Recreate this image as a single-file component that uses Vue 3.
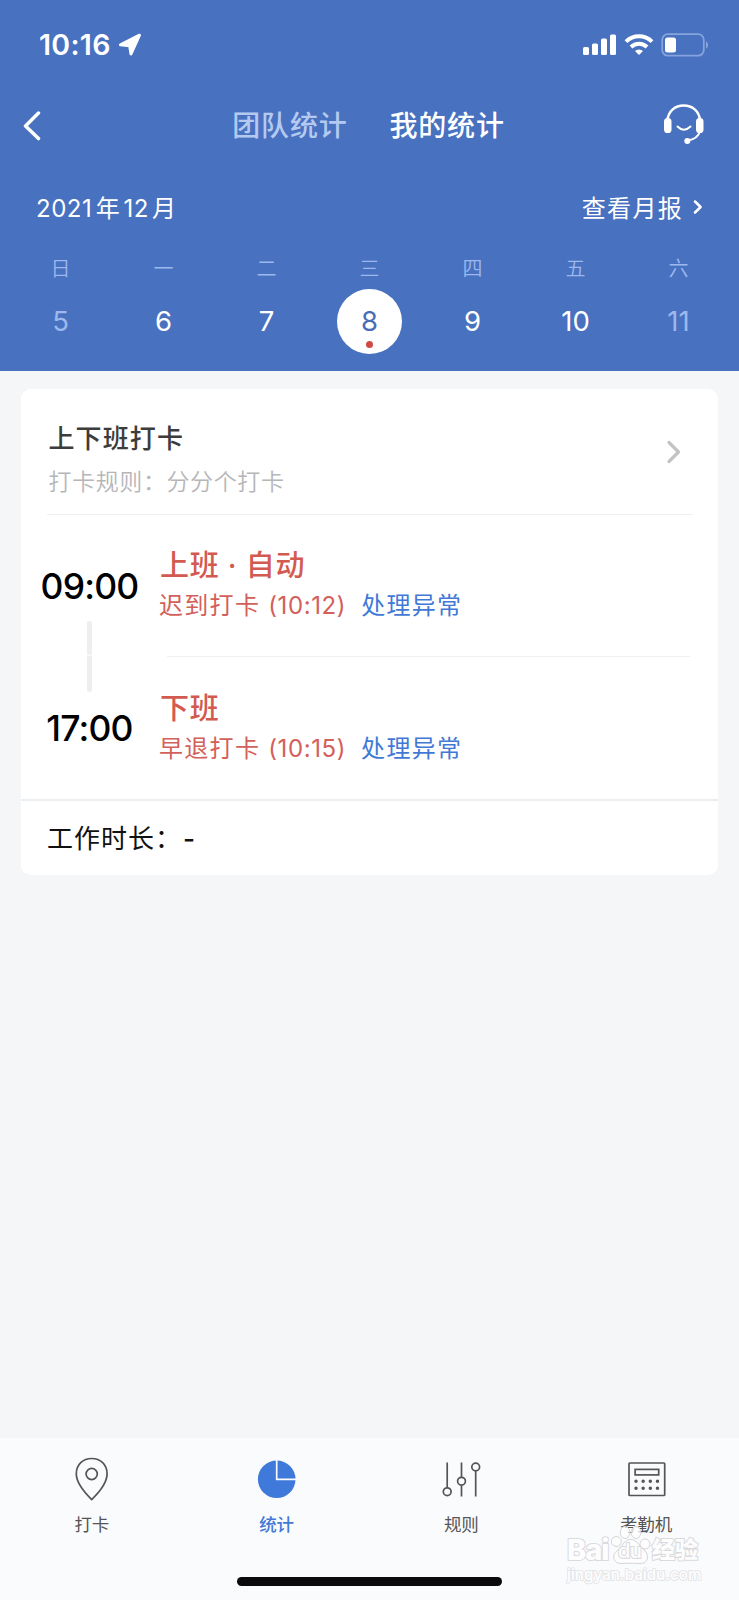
<script setup>
import { ref } from 'vue'

const tabs = ['团队统计', '我的统计']
const activeTab = ref(1)

const days = [
    { week: '日', day: 5, muted: true },
    { week: '一', day: 6 },
    { week: '二', day: 7 },
    { week: '三', day: 8, dot: true },
    { week: '四', day: 9 },
    { week: '五', day: 10 },
    { week: '六', day: 11, muted: true }
]
const selected = ref(8)

const records = [
    { time: '09:00', title: '上班 · 自动', status: '迟到打卡', at: '(10:12)' },
    { time: '17:00', title: '下班', status: '早退打卡', at: '(10:15)' }
]

const navs = [
    { key: 'clock', label: '打卡' },
    { key: 'stats', label: '统计' },
    { key: 'rules', label: '规则' },
    { key: 'device', label: '考勤机' }
]
const activeNav = ref('stats')
</script>

<template>
    <div class="page" lang="zh-CN">
        <header class="header">
            <div class="status-bar">
                <span class="clock">10:16</span>
                <svg class="location" width="24" height="24" viewBox="0 0 24 24">
                    <path d="M21.5 2.200 13 21 11.600 12.800 2.500 11.800Z" fill="#fff" stroke="#fff" stroke-width="3" stroke-linejoin="round" />
                </svg>
                <svg class="signals" width="128" height="24" viewBox="0 0 128 24">
                    <g fill="#fff">
                        <rect x="1" y="14" width="6" height="8" rx="1.5" />
                        <rect x="10" y="10.5" width="6" height="11.5" rx="1.5" />
                        <rect x="19" y="5.5" width="6" height="16.5" rx="1.5" />
                        <rect x="28" y="1.5" width="6" height="20.5" rx="1.5" />
                        <path d="M57 22 53 18a5.800 5.800 0 0 1 8 0Z" />
                        <rect x="83" y="4.5" width="11" height="15" rx="2.5" />
                    </g>
                    <g fill="none" stroke="#fff" stroke-width="4">
                        <path d="M44 8.6a18.6 18.6 0 0 1 26 0" />
                        <path d="M49 14a11.4 11.4 0 0 1 16 0" />
                    </g>
                    <rect x="80.2" y="1.2" width="41.6" height="21.4" rx="5.5" fill="none" stroke="#86a4dc" stroke-width="1.8" />
                    <path d="M124 8.3a4.2 4.2 0 0 1 0 7.4Z" fill="#86a4dc" />
                </svg>
            </div>

            <div class="nav-bar">
                <svg class="back" width="20" height="32" viewBox="0 0 20 32">
                    <path d="M16.5 4 3.5 17l13 12.6" fill="none" stroke="#fff" stroke-width="3.5" stroke-linecap="round" stroke-linejoin="round" />
                </svg>
                <div class="tabs">
                    <span v-for="(tab, i) in tabs" :key="tab" :class="{ active: i === activeTab }" @click="activeTab = i">{{ tab }}</span>
                </div>
                <svg class="service" width="42" height="42" viewBox="0 0 42 42">
                    <g fill="none" stroke="#fff" stroke-linecap="round">
                        <path d="M4.5 16C5.5 7 12 1.5 20.7 1.5S36 7 37 16" stroke-width="2.5" />
                        <path d="M14.5 22.5q6.300 6.400 13 0" stroke-width="2" />
                        <path d="M37 27c-1.200 5-5.500 8.500-12.500 9.500" stroke-width="2" />
                    </g>
                    <rect x="1" y="14" width="7.5" height="15" rx="3.6" fill="#fff" />
                    <rect x="33" y="14" width="7.5" height="15" rx="3.6" fill="#fff" />
                    <circle cx="24.3" cy="37" r="3" fill="#fff" />
                </svg>
            </div>

            <div class="month-row">
                <span class="month"><b>2021</b>年<b class="mon">12</b>月</span>
                <span class="report">查看月报</span>
                <svg width="10" height="16" viewBox="0 0 10 16">
                    <path d="M2 2.500 7.600 8 2 13.500" fill="none" stroke="#fff" stroke-width="2.500" stroke-linecap="round" stroke-linejoin="round" />
                </svg>
            </div>

            <div class="week">
                <div v-for="d in days" :key="d.day" class="day" @click="selected = d.day">
                    <span class="week-name">{{ d.week }}</span>
                    <span class="num" :class="{ muted: d.muted, selected: d.day === selected }">
                        {{ d.day }}
                        <i v-if="d.dot" class="dot"></i>
                    </span>
                </div>
            </div>
        </header>

        <main class="content">
            <section class="card">
                <div class="rule">
                    <div class="rule-text">
                        <h3>上下班打卡</h3>
                        <p>打卡规则：分分个打卡</p>
                    </div>
                    <svg width="16" height="24" viewBox="0 0 16 24">
                        <path d="M3 2.500 12.500 12 3 21.500" fill="none" stroke="#c3c3c3" stroke-width="3.200" stroke-linecap="round" stroke-linejoin="round" />
                    </svg>
                </div>

                <div class="records">
                    <div v-for="r in records" :key="r.time" class="record">
                        <div class="time">{{ r.time }}</div>
                        <div class="info">
                            <div class="title">{{ r.title }}</div>
                            <div class="state">
                                <span>{{ r.status }}</span>
                                <span class="at">{{ r.at }}</span>
                                <a>处理异常</a>
                            </div>
                        </div>
                    </div>
                </div>

                <div class="total">工作时长：<span>-</span></div>
            </section>
        </main>

        <footer class="tabbar">
            <div class="nav-items">
                <div v-for="n in navs" :key="n.key" class="nav-item" :class="{ active: n.key === activeNav }" @click="activeNav = n.key">
                    <svg width="44" height="46" viewBox="0 0 44 46">
                        <g v-if="n.key === 'clock'" fill="none" stroke="#555" stroke-width="1.7" stroke-linejoin="round">
                            <path d="M21.7 44.6C15.500 38.500 6.300 28.500 6.300 18.800 6.300 9.500 13 3.500 21.700 3.500S37.100 9.500 37.100 18.800C37.100 28.500 28 38.500 21.700 44.600Z" />
                            <circle cx="21.7" cy="19" r="5.6" />
                        </g>
                        <g v-else-if="n.key === 'stats'">
                            <circle cx="21.7" cy="24.3" r="18.8" fill="#3f79d9" />
                            <path d="M21.7 5v19.300H41" fill="none" stroke="#fafbfd" stroke-width="1.7" />
                        </g>
                        <g v-else-if="n.key === 'rules'" fill="none" stroke="#555" stroke-width="1.7">
                            <path d="M7.200 7.500v25.300M21.500 7.500v15M21.500 30v11.500M35.700 16v25.500" />
                            <circle cx="7.2" cy="36.7" r="3.9" />
                            <circle cx="21.5" cy="26.2" r="3.9" />
                            <circle cx="35.7" cy="12" r="3.9" />
                        </g>
                        <g v-else fill="none" stroke="#555" stroke-width="1.7">
                            <rect x="4" y="8" width="35.7" height="32.5" rx="0.8" />
                            <rect x="10.1" y="14.4" width="23.6" height="5.5" />
                            <path d="M11 26.200h22M11 33.300h22" stroke-width="3.5" stroke-linecap="round" stroke-dasharray="0 7.160" />
                        </g>
                    </svg>
                    <span>{{ n.label }}</span>
                </div>
            </div>
            <div class="home-bar"></div>

            <div class="watermark">
                <div class="brand">
                    <span class="bai">Bai</span>
                    <span class="paw">
                        <svg width="40" height="40" viewBox="0 0 40 40">
                            <g fill="#fdfdfe" fill-opacity="0.75" stroke="#d5d5d8" stroke-width="1">
                                <circle cx="5.3" cy="16.5" r="5" />
                                <ellipse cx="14" cy="7.5" rx="4.8" ry="6" />
                                <ellipse cx="25" cy="7.5" rx="4.8" ry="6" />
                                <circle cx="34" cy="19" r="5" />
                                <path d="M19.5 14.500C13 14.500 12 21 7 25-1 31 3 39 11 38.500c4-.3 13-.3 18 0 8 .5 10-8 4-13.500-5-4-7-10.500-13.500-10.500Z" />
                            </g>
                        </svg>
                        <b>du</b>
                    </span>
                    <span class="exp">经验</span>
                </div>
                <div class="site">jingyan.baidu.com</div>
            </div>
        </footer>
    </div>
</template>

<style>
body {
    margin: 0;
    background: #f4f6f8;
}
</style>

<style scoped>
.page {
    width: 739px;
    height: 1600px;
    display: flex;
    flex-direction: column;
    overflow: hidden;
    background: #f4f6f8;
    font-family: Inter, "Noto Sans CJK SC", sans-serif;
}

/* header */
.header {
    height: 371px;
    background: #4871c0;
    color: #fff;
}
.status-bar {
    display: flex;
    align-items: center;
    height: 89px;
    padding: 0 29px 0 39px;
}
.clock {
    font-size: 28.5px;
    font-weight: 600;
    letter-spacing: 0.3px;
}
.location {
    margin-left: 7px;
}
.signals {
    margin-left: auto;
}
.nav-bar {
    display: flex;
    align-items: center;
    justify-content: space-between;
    height: 72px;
    padding: 0 34px 0 22px;
}
.tabs {
    display: flex;
    gap: 42px;
    margin: -3px 0 0 32px;
    font-size: 28px;
    font-weight: 500;
    letter-spacing: 0.8px;
    color: #b4c9f0;
}
.tabs .active {
    color: #fff;
}
.month-row {
    display: flex;
    align-items: center;
    height: 91px;
    margin-bottom: 2px;
    padding: 0 36px 0 36px;
    font-size: 24px;
    letter-spacing: 0.8px;
}
.month b {
    font-weight: 400;
    letter-spacing: 0.5px;
    margin-right: 3.5px;
}
.month .mon {
    margin: 0 3px 0 3px;
}
.report {
    margin-left: auto;
    margin-right: 10px;
    letter-spacing: 1.3px;
}
.week {
    display: flex;
    padding: 0 9px;
}
.day {
    width: 103px;
    display: flex;
    flex-direction: column;
    align-items: center;
}
.week-name {
    height: 35px;
    line-height: 31px;
    font-size: 20px;
    font-weight: 350;
    color: #9db8ec;
}
.num {
    position: relative;
    width: 65px;
    height: 65px;
    border-radius: 50%;
    line-height: 65px;
    text-align: center;
    font-size: 27.5px;
}
.num.muted {
    color: #9db8ec;
}
.num.selected {
    background: #fff;
    color: #4a6db8;
}
.dot {
    position: absolute;
    left: 29px;
    bottom: 6px;
    width: 7px;
    height: 7px;
    border-radius: 50%;
    background: #cf4a43;
}

/* card */
.content {
    flex: 1;
    padding: 18px 21px 0;
}
.card {
    height: 486px;
    border-radius: 10px;
    background: #fff;
}
.rule {
    display: flex;
    align-items: center;
    height: 125px;
    margin: 0 25px 0 26px;
    padding: 0 11px 0 1.5px;
    border-bottom: 1px solid #eeeff0;
}
.rule-text {
    flex: 1;
    padding-top: 16px;
}
.rule h3 {
    margin: 0;
    line-height: 44px;
    font-size: 26px;
    font-weight: 500;
    letter-spacing: 1.1px;
    color: #3c3c3c;
}
.rule p {
    margin: 0;
    line-height: 42px;
    font-size: 23px;
    font-weight: 350;
    letter-spacing: 0.6px;
    color: #b6b6b9;
}
.record {
    display: flex;
    height: 142px;
}
.time {
    position: relative;
    width: 138px;
    box-sizing: border-box;
    padding-right: 1px;
    line-height: 144px;
    text-align: center;
    font-size: 35.5px;
    font-weight: 500;
    letter-spacing: -0.8px;
    color: #000;
}
/* connector down to the next record */
.record:first-child .time::after {
    content: "";
    position: absolute;
    left: 66px;
    top: 106px;
    width: 5px;
    height: 71px;
    border-radius: 2px;
    background: linear-gradient(#eee 33px, #f7f7f7 33px, #f7f7f7 35px, #eee 35px);
}
.info {
    flex: 1;
    padding-top: 30px;
    box-sizing: border-box;
}
.record:first-child .info {
    margin-right: 28px;
    background: linear-gradient(#f0f1f2, #f0f1f2) right bottom / calc(100% - 8px) 1px no-repeat;
}
.record:last-child .info {
    padding-top: 31px;
}
.title {
    padding-left: 1px;
    line-height: 42px;
    font-size: 29px;
    font-weight: 500;
    letter-spacing: 0.7px;
    color: #d35a50;
}
.state {
    display: flex;
    line-height: 38px;
    font-size: 24px;
    letter-spacing: 1.3px;
    color: #d3605a;
}
.at {
    margin: 0 15px 0 8px;
    letter-spacing: 0.6px;
}
.state a {
    color: #4279d6;
}
.total {
    height: 74px;
    border-top: 2px solid #edeeef;
    padding-left: 26px;
    line-height: 75px;
    font-size: 26px;
    letter-spacing: 1px;
    color: #111;
}
.total span {
    margin-left: 1px;
    font-weight: 500;
}

/* bottom bar */
.tabbar {
    position: relative;
    height: 162px;
    background: #fafbfd;
}
.nav-items {
    display: flex;
    padding-top: 17px;
}
.nav-item {
    flex: 1;
    display: flex;
    flex-direction: column;
    align-items: center;
    font-size: 17.5px;
    color: #555;
}
.nav-item span {
    margin-top: 8px;
    margin-right: 1px;
    line-height: 31px;
}
.nav-item.active span {
    color: #3f79d9;
    font-weight: 500;
}
.home-bar {
    width: 265px;
    height: 9px;
    margin: 37px auto 0;
    border-radius: 5px;
    background: #0a0a0c;
}
.watermark {
    position: absolute;
    left: 567px;
    top: 87px;
    width: 133px;
    color: #fdfdfe;
    -webkit-text-stroke: 2px #dadadd;
    paint-order: stroke fill;
}
.watermark svg {
    paint-order: normal;
}
.brand {
    display: flex;
    height: 40px;
    align-items: flex-end;
    font-weight: 800;
    line-height: 30px;
}
.bai {
    width: 44px;
    font-size: 29px;
    letter-spacing: -1px;
}
.paw {
    position: relative;
    width: 40px;
    height: 40px;
}
.paw b {
    position: absolute;
    left: 7px;
    bottom: -1px;
    font-size: 20px;
    font-weight: 500;
    letter-spacing: -0.5px;
}
.exp {
    margin-left: 1px;
    font-size: 23px;
}
.site {
    line-height: 19px;
    font-size: 15px;
    font-weight: 600;
    -webkit-text-stroke: 1.5px #e2e2e4;
}
</style>
